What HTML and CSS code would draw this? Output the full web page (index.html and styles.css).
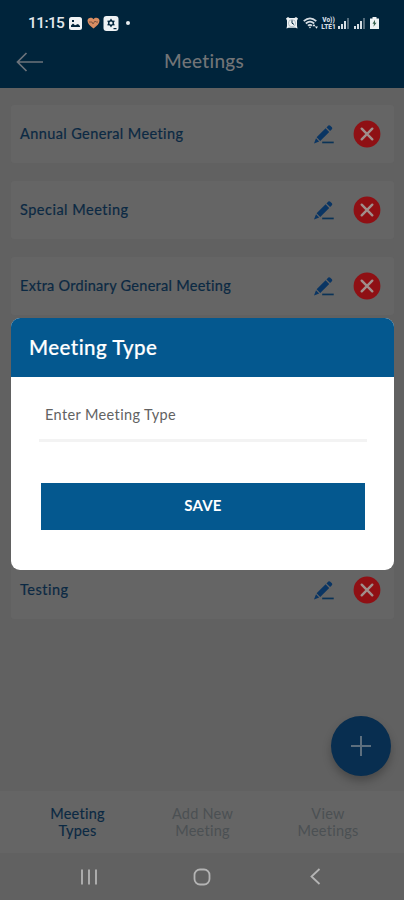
FILE: index.html
```html
<!DOCTYPE html>
<html lang="en">
<head>
<meta charset="utf-8">
<title>Meetings</title>
<link rel="stylesheet" href="styles.css">
</head>
<body>
<svg class="defs" aria-hidden="true">
  <symbol id="pencil" viewBox="0 0 22 20">
    <path fill="#0a3563" d="M3.600 13.300 12.600 4.300 16.200 7.900 7.200 16.900ZM13.500 3.400 15.300 1.600Q16.300.8 17.300 1.700L18.900 3.300Q19.700 4.200 18.900 5.200L17.100 7ZM3 14.300 6.200 17.500 1 19.400Z"/>
    <path fill="#0a3357" d="M9.200 17.600H20.700V19.300H9.200Z"/>
  </symbol>
  <symbol id="remove" viewBox="0 0 28 28">
    <circle cx="14" cy="14" r="13.400" fill="#8f1014"/>
    <path d="m8.700 8.700 10.600 10.600M19.300 8.700 8.700 19.300" stroke="#a08f8c" stroke-width="2.400" stroke-linecap="round"/>
  </symbol>
  <symbol id="signal" viewBox="0 0 12 12">
    <path fill="#d5dde3" d="M0 9h2v3H0zM3 7h2v5H3zM6 4h2v8H6z"/>
    <path fill="#536b7b" d="M9 1h2v11H9z"/>
  </symbol>
</svg>
<div class="screen">
  <header class="top">
    <div class="status">
      <span class="clock">11:15</span>
      <svg class="s-photo" viewBox="0 0 13 13"><rect width="13" height="13" rx="2.5" fill="#f0f3f5"/><path fill="#00243b" d="M2 10V8.600L4 6.500 6 8.200 9 7l2 2v1zM3 3h2v2H3z"/></svg>
      <svg class="s-heart" viewBox="0 0 13 12"><path fill="#d98d62" d="M6.500 11.500C3 9 .5 6.600.5 3.800.5.700 4.600-.3 6.500 2.300 8.400-.3 12.500.7 12.500 3.800c0 2.800-2.500 5.200-6 7.700z"/><path d="M2 5h3l1 2 2-3 1 1h2" fill="none" stroke="#6b4a3b" stroke-width=".8"/></svg>
      <svg class="s-app" viewBox="0 0 15 15"><rect width="15" height="15" rx="3" fill="#eef2f4"/><path d="m7.500 2.500 1.300 2 2.500.3-1 2.200 1 2.300-2.600.2-1.200 2-1.300-2-2.500-.2 1-2.300-1-2.200 2.500-.3z" fill="#00243b"/><circle cx="7.500" cy="7" r="1.600" fill="#eef2f4"/><path d="M10 12h3v1.200h-3z" fill="#00243b"/></svg>
      <i class="dot"></i>
      <div class="tray">
        <svg class="t-alarm" viewBox="0 0 12 12"><path fill="#eef2f4" d="M0 1.500 2 0l1.500 1h5L10 0l2 1.500-1 2V9l.5 2.500-2-.8h-7l-2 .8L1 9V3.500z"/><path d="M6 3.200v3l2 1.200" fill="none" stroke="#00243b"/><circle cx="6" cy="6.200" r="3.600" fill="none" stroke="#8c9aa4" stroke-width=".6"/></svg>
        <svg class="t-wifi" viewBox="0 0 15 12"><path d="M.7 4.200Q7 -1.500 13.300 4.200M2.800 6.500Q7 2.800 11.200 6.500M4.900 8.700Q7 6.900 9.100 8.700" fill="none" stroke="#d5dde3" stroke-width="1.700"/><path d="M7 11.500 5.800 9.800h2.400zM9.500 9.200 11 7l1.400 2.200zM12 9.500h3l-1.500 2.300z" fill="#eef2f4"/></svg>
        <span class="t-lte"><b>Vo))</b><b>LTE1</b></span>
        <svg class="t-sig" viewBox="0 0 12 12"><use href="#signal"/></svg>
        <svg class="t-sig second" viewBox="0 0 12 12"><use href="#signal"/></svg>
        <svg class="t-bat" viewBox="0 0 9 12"><path fill="#eef2f4" d="M2.500 0h4v1.500H9V12H0V1.500h2.500z"/><path d="M5 2.700 2.500 6.800H4L3.500 9.800 6.500 5.700H5z" fill="#35604c"/></svg>
      </div>
    </div>
    <div class="bar">
      <svg class="back" viewBox="0 0 28 20"><path d="M10.500 1 1.500 10l9 9M1.500 10H27" fill="none" stroke="#6c737b" stroke-width="1.700"/></svg>
      <h1>Meetings</h1>
    </div>
  </header>
  <main class="list">
    <div class="card"><span>Annual General Meeting</span><svg class="edit"><use href="#pencil"/></svg><svg class="del"><use href="#remove"/></svg></div>
    <div class="card"><span class="wide">Special Meeting</span><svg class="edit"><use href="#pencil"/></svg><svg class="del"><use href="#remove"/></svg></div>
    <div class="card"><span class="tight">Extra Ordinary General Meeting</span><svg class="edit"><use href="#pencil"/></svg><svg class="del"><use href="#remove"/></svg></div>
    <div class="card last"><span class="wide">Testing</span><svg class="edit"><use href="#pencil"/></svg><svg class="del"><use href="#remove"/></svg></div>
    <div class="fab"><svg viewBox="0 0 22 22"><path d="M11 1v20M1 11h20" stroke="#5d6f7e" stroke-width="2"/></svg></div>
  </main>
  <nav class="tabs">
    <span class="active">Meeting<br>Types</span>
    <span>Add New<br>Meeting</span>
    <span>View<br>Meetings</span>
  </nav>
  <footer class="system">
    <svg viewBox="0 0 18 18"><path d="M2 1.500v15M9 1.500v15M16 1.500v15" stroke="#b4b4b4" stroke-width="1.800"/></svg>
    <svg viewBox="0 0 18 18"><rect x="1.500" y="1.500" width="15" height="15" rx="5.500" fill="none" stroke="#b4b4b4" stroke-width="1.800"/></svg>
    <svg viewBox="0 0 18 18"><path d="M13.500 1 5.500 8.500l8 7.500" fill="none" stroke="#b4b4b4" stroke-width="1.800"/></svg>
  </footer>
  <section class="dialog">
    <h2>Meeting Type</h2>
    <div class="form">
      <div class="field"><span>Enter Meeting Type</span></div>
      <div class="save"><span>SAVE</span></div>
    </div>
  </section>
</div>
</body>
</html>
```
FILE: styles.css
```css
* { box-sizing: border-box; }
body { margin: 0; font-family: Lato, "Open Sans", sans-serif; }
svg { display: block; flex: none; }
.defs { position: absolute; width: 0; height: 0; }
.screen { position: relative; width: 404px; height: 900px; display: flex; flex-direction: column; background: #616161; overflow: hidden; }

.top { height: 88px; background: #00243b; }
.status { height: 44px; display: flex; align-items: center; padding: 2px 25px 0 28px; }
.clock { font-family: Roboto, sans-serif; font-size: 15.5px; font-weight: 500; color: #e3e8eb; letter-spacing: -.6px; width: 41px; }
.s-photo { width: 13px; height: 13px; }
.s-heart { width: 13px; height: 12px; margin-left: 5px; }
.s-app { width: 16px; height: 15px; margin-left: 3px; }
.dot { width: 4px; height: 4px; border-radius: 50%; background: #e8edf0; margin-left: 7px; }
.tray { margin-left: auto; display: flex; align-items: center; }
.t-alarm { width: 12px; height: 12px; }
.t-wifi { width: 15px; height: 12px; margin-left: 5px; }
.t-lte { width: 17px; margin-left: 2px; display: flex; flex-direction: column; align-items: center; font: 700 6.5px/8px Roboto, sans-serif; color: #d5dde3; }
.t-lte b + b { margin-top: -1px; }
.t-sig { width: 12px; height: 12px; margin-left: 1px; }
.t-sig.second { margin-left: 4px; }
.t-bat { width: 9px; height: 12px; margin-left: 4px; }

.bar { height: 44px; padding: 0 16px; display: grid; grid-template-columns: 28px 1fr 24px; align-items: center; }
.bar h1 { margin: -10px 0 0; text-align: center; font-size: 19px; line-height: 24px; font-weight: 500; color: #727477; letter-spacing: .3px; }
.back { width: 28px; height: 20px; margin-top: -9px; }

.list { position: relative; flex: 1; padding: 17px 10px 0 11px; }
.card { height: 58px; margin-bottom: 18px; padding: 0 13px 0 9px; display: flex; align-items: center; background: #656565; border-radius: 3px; }
.card.last { margin-top: 246px; }
.card span { flex: 1; margin-top: -2px; font-size: 14.5px; font-weight: 400; color: #0b2943; letter-spacing: .4px; -webkit-text-stroke: .2px; }
.card .wide { letter-spacing: .5px; }
.card .tight { letter-spacing: .28px; }
.edit { width: 22px; height: 20px; margin-right: 18px; }
.del { width: 28px; height: 28px; }
.fab { position: absolute; right: 13px; bottom: 15px; width: 60px; height: 60px; border-radius: 50%; background: #082e50; display: grid; place-items: center; box-shadow: 0 5px 9px rgba(0,0,0,.25); }
.fab svg { width: 22px; height: 22px; }

.tabs { height: 62px; padding: 14px 14px 0 15px; display: grid; grid-template-columns: repeat(3, 1fr); background: #656565; text-align: center; font-size: 14.5px; line-height: 17px; color: #4b5053; letter-spacing: .25px; }
.tabs .active { color: #0b2943; -webkit-text-stroke: .15px; }
.tabs span:last-child { padding-left: 1px; }
.system { height: 47px; padding: 0 32px; display: grid; grid-template-columns: repeat(3, 1fr); align-items: center; justify-items: center; background: #616161; }
.system svg { width: 18px; height: 18px; }

.dialog { position: absolute; left: 11px; top: 318px; width: 383px; height: 251.5px; border-radius: 9px; overflow: hidden; background: #fff; }
.dialog h2 { margin: 0; height: 58.5px; padding-left: 18px; background: #04588f; color: #fff; font-size: 20.5px; line-height: 58px; font-weight: 500; letter-spacing: .45px; -webkit-text-stroke: .2px; }
.form { padding: 20px 27px 0 28px; }
.field { height: 45px; border-bottom: 3px solid #f3f3f3; padding: 9px 0 0 6px; font-size: 14.5px; line-height: 18px; color: #626262; letter-spacing: .38px; }
.save { margin: 41px 2px 0; height: 47px; background: #04588f; display: grid; place-items: center; color: #fff; font-size: 15px; line-height: 18px; font-weight: 700; letter-spacing: .2px; }
.save span { margin-top: -2px; }
```
